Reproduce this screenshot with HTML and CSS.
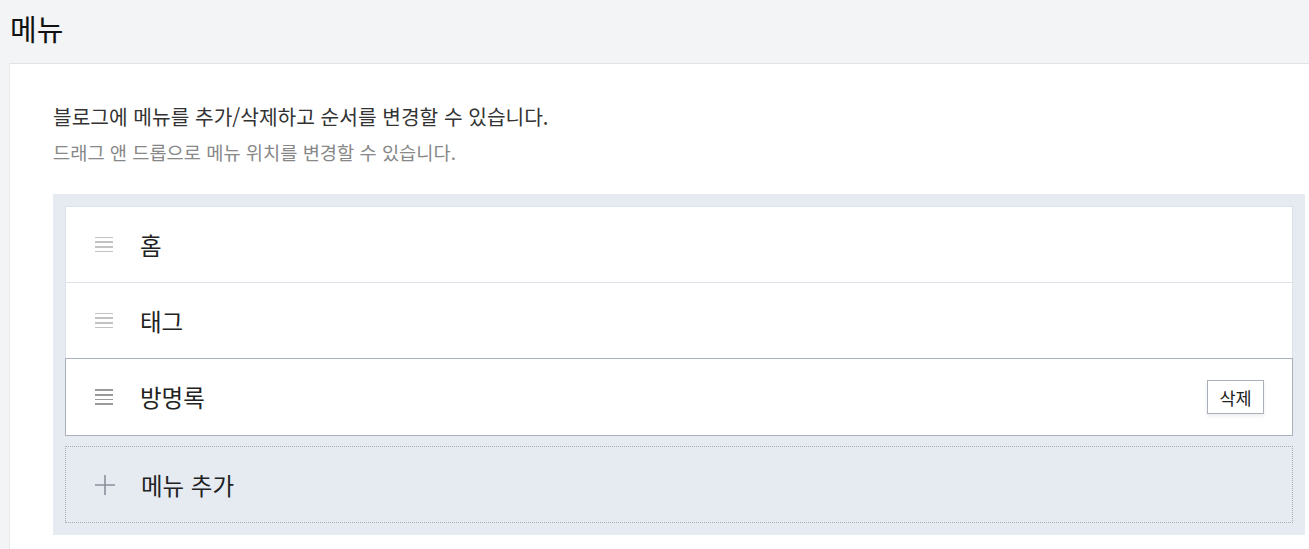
FILE: index.html
```html
<!DOCTYPE html>
<html lang="ko">
<head>
<meta charset="utf-8">
<link rel="stylesheet" href="styles.css">
</head>
<body>
<header class="page-head"><h1 class="page-title">메뉴</h1></header>
<main class="panel">
  <p class="desc">블로그에 메뉴를 추가/삭제하고 순서를 변경할 수 있습니다.</p>
  <p class="hint">드래그 앤 드롭으로 메뉴 위치를 변경할 수 있습니다.</p>
  <div class="menu-list">
    <div class="item">
      <span class="handle"><i></i><i></i><i></i><i></i></span>
      <span class="label">홈</span>
    </div>
    <div class="item">
      <span class="handle"><i></i><i></i><i></i><i></i></span>
      <span class="label">태그</span>
    </div>
    <div class="item active">
      <span class="handle"><i></i><i></i><i></i><i></i></span>
      <span class="label">방명록</span>
      <button class="del">삭제</button>
    </div>
    <div class="add">
      <svg class="plus" width="20" height="20" viewBox="0 0 20 20"><path d="M10 0v20M0 10h20" stroke="#8a909a" stroke-width="1.6" fill="none"/></svg>
      <span class="label">메뉴 추가</span>
    </div>
  </div>
</main>
</body>
</html>
```
FILE: styles.css
```css
html, body {
  margin: 0;
  padding: 0;
}
body {
  background: #f3f4f6;
  font-family: "Noto Sans CJK KR", "Noto Sans", sans-serif;
  color: #222;
  overflow: hidden;
}
.page-head {
  height: 63px;
  box-sizing: border-box;
  padding: 9px 0 0 10px;
}
.page-title {
  margin: 0;
  font-size: 29px;
  font-weight: 400;
  line-height: 38px;
  color: #111;
}
.panel {
  margin-left: 9px;
  background: #fff;
  border-top: 1px solid #e0e3e8;
  border-left: 1px solid #e8eaee;
  padding: 38px 4px 14px 43px;
}
.desc {
  margin: 0;
  font-size: 20.3px;
  line-height: 28px;
  color: #333;
}
.hint {
  margin: 9px 0 0;
  font-size: 18.7px;
  line-height: 26px;
  color: #888;
}
.menu-list {
  margin-top: 29px;
  background: #e6ebf2;
  padding: 12px 12px 12px 12px;
  display: flex;
  flex-direction: column;
}
.item {
  position: relative;
  display: flex;
  align-items: center;
  height: 77px;
  box-sizing: border-box;
  background: #fff;
  border: 1px solid #dde2ea;
  padding: 0 28px 0 29px;
}
.item + .item {
  margin-top: -1px;
}
.item.active {
  border-color: #a9b0ba;
  height: 78px;
  z-index: 1;
}
.handle {
  display: flex;
  flex-direction: column;
  gap: 3px;
  width: 18px;
  margin-right: 27px;
}
.handle i {
  display: block;
  height: 1.6px;
  background: #c2c2c2;
}
.item.active .handle i {
  background: #9a9a9a;
}
.label {
  font-size: 23.5px;
  color: #222;
}
.del {
  margin-left: auto;
  width: 57px;
  height: 34px;
  background: #fff;
  border: 1px solid #a9b0ba;
  box-shadow: 0 2px 4px rgba(0,0,0,0.08);
  font-family: inherit;
  font-size: 17.5px;
  color: #222;
  padding: 0;
  cursor: pointer;
}
.add {
  margin-top: 10px;
  display: flex;
  align-items: center;
  height: 77px;
  box-sizing: border-box;
  border: 1px dotted #a9aeb6;
  padding: 0 0 0 29px;
}
.plus {
  margin-right: 26px;
}
```
